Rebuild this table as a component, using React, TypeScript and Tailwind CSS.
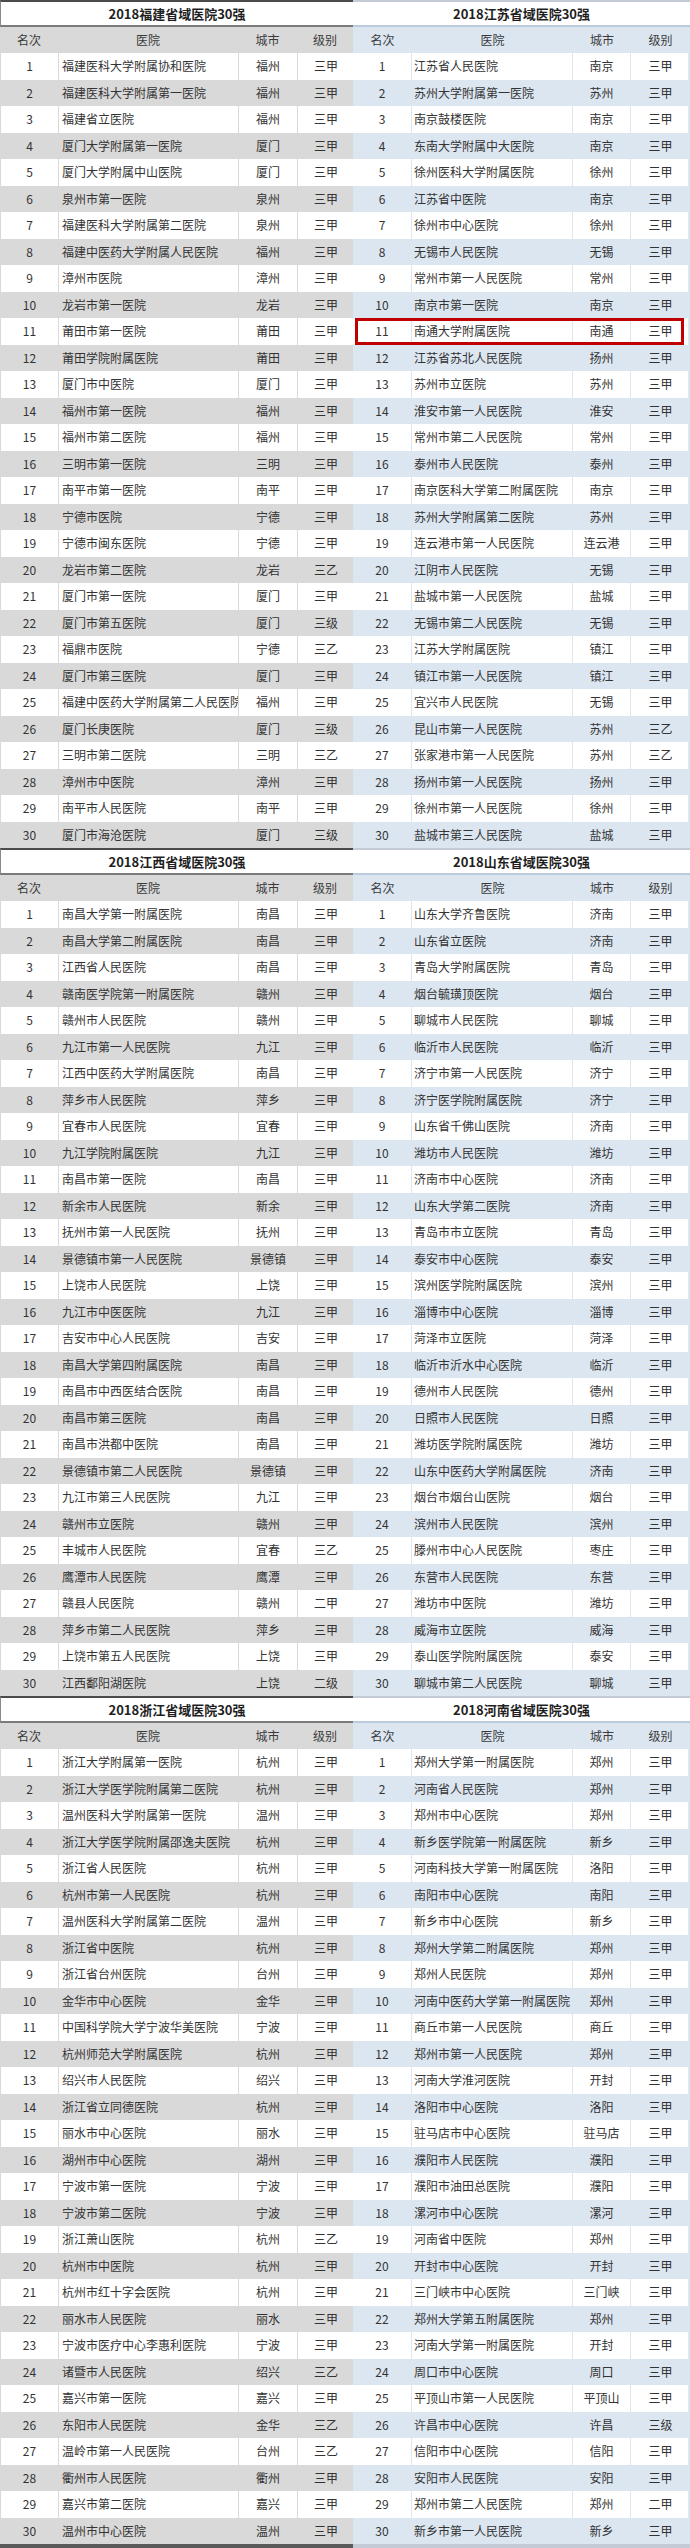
import React from "react";

type Row = [string, string, string];

const fujian: Row[] = [
  ["福建医科大学附属协和医院", "福州", "三甲"],
  ["福建医科大学附属第一医院", "福州", "三甲"],
  ["福建省立医院", "福州", "三甲"],
  ["厦门大学附属第一医院", "厦门", "三甲"],
  ["厦门大学附属中山医院", "厦门", "三甲"],
  ["泉州市第一医院", "泉州", "三甲"],
  ["福建医科大学附属第二医院", "泉州", "三甲"],
  ["福建中医药大学附属人民医院", "福州", "三甲"],
  ["漳州市医院", "漳州", "三甲"],
  ["龙岩市第一医院", "龙岩", "三甲"],
  ["莆田市第一医院", "莆田", "三甲"],
  ["莆田学院附属医院", "莆田", "三甲"],
  ["厦门市中医院", "厦门", "三甲"],
  ["福州市第一医院", "福州", "三甲"],
  ["福州市第二医院", "福州", "三甲"],
  ["三明市第一医院", "三明", "三甲"],
  ["南平市第一医院", "南平", "三甲"],
  ["宁德市医院", "宁德", "三甲"],
  ["宁德市闽东医院", "宁德", "三甲"],
  ["龙岩市第二医院", "龙岩", "三乙"],
  ["厦门市第一医院", "厦门", "三甲"],
  ["厦门市第五医院", "厦门", "三级"],
  ["福鼎市医院", "宁德", "三乙"],
  ["厦门市第三医院", "厦门", "三甲"],
  ["福建中医药大学附属第二人民医院", "福州", "三甲"],
  ["厦门长庚医院", "厦门", "三级"],
  ["三明市第二医院", "三明", "三乙"],
  ["漳州市中医院", "漳州", "三甲"],
  ["南平市人民医院", "南平", "三甲"],
  ["厦门市海沧医院", "厦门", "三级"],
];

const jiangsu: Row[] = [
  ["江苏省人民医院", "南京", "三甲"],
  ["苏州大学附属第一医院", "苏州", "三甲"],
  ["南京鼓楼医院", "南京", "三甲"],
  ["东南大学附属中大医院", "南京", "三甲"],
  ["徐州医科大学附属医院", "徐州", "三甲"],
  ["江苏省中医院", "南京", "三甲"],
  ["徐州市中心医院", "徐州", "三甲"],
  ["无锡市人民医院", "无锡", "三甲"],
  ["常州市第一人民医院", "常州", "三甲"],
  ["南京市第一医院", "南京", "三甲"],
  ["南通大学附属医院", "南通", "三甲"],
  ["江苏省苏北人民医院", "扬州", "三甲"],
  ["苏州市立医院", "苏州", "三甲"],
  ["淮安市第一人民医院", "淮安", "三甲"],
  ["常州市第二人民医院", "常州", "三甲"],
  ["泰州市人民医院", "泰州", "三甲"],
  ["南京医科大学第二附属医院", "南京", "三甲"],
  ["苏州大学附属第二医院", "苏州", "三甲"],
  ["连云港市第一人民医院", "连云港", "三甲"],
  ["江阴市人民医院", "无锡", "三甲"],
  ["盐城市第一人民医院", "盐城", "三甲"],
  ["无锡市第二人民医院", "无锡", "三甲"],
  ["江苏大学附属医院", "镇江", "三甲"],
  ["镇江市第一人民医院", "镇江", "三甲"],
  ["宜兴市人民医院", "无锡", "三甲"],
  ["昆山市第一人民医院", "苏州", "三乙"],
  ["张家港市第一人民医院", "苏州", "三乙"],
  ["扬州市第一人民医院", "扬州", "三甲"],
  ["徐州市第一人民医院", "徐州", "三甲"],
  ["盐城市第三人民医院", "盐城", "三甲"],
];

const jiangxi: Row[] = [
  ["南昌大学第一附属医院", "南昌", "三甲"],
  ["南昌大学第二附属医院", "南昌", "三甲"],
  ["江西省人民医院", "南昌", "三甲"],
  ["赣南医学院第一附属医院", "赣州", "三甲"],
  ["赣州市人民医院", "赣州", "三甲"],
  ["九江市第一人民医院", "九江", "三甲"],
  ["江西中医药大学附属医院", "南昌", "三甲"],
  ["萍乡市人民医院", "萍乡", "三甲"],
  ["宜春市人民医院", "宜春", "三甲"],
  ["九江学院附属医院", "九江", "三甲"],
  ["南昌市第一医院", "南昌", "三甲"],
  ["新余市人民医院", "新余", "三甲"],
  ["抚州市第一人民医院", "抚州", "三甲"],
  ["景德镇市第一人民医院", "景德镇", "三甲"],
  ["上饶市人民医院", "上饶", "三甲"],
  ["九江市中医医院", "九江", "三甲"],
  ["吉安市中心人民医院", "吉安", "三甲"],
  ["南昌大学第四附属医院", "南昌", "三甲"],
  ["南昌市中西医结合医院", "南昌", "三甲"],
  ["南昌市第三医院", "南昌", "三甲"],
  ["南昌市洪都中医院", "南昌", "三甲"],
  ["景德镇市第二人民医院", "景德镇", "三甲"],
  ["九江市第三人民医院", "九江", "三甲"],
  ["赣州市立医院", "赣州", "三甲"],
  ["丰城市人民医院", "宜春", "三乙"],
  ["鹰潭市人民医院", "鹰潭", "三甲"],
  ["赣县人民医院", "赣州", "二甲"],
  ["萍乡市第二人民医院", "萍乡", "三甲"],
  ["上饶市第五人民医院", "上饶", "三甲"],
  ["江西鄱阳湖医院", "上饶", "二级"],
];

const shandong: Row[] = [
  ["山东大学齐鲁医院", "济南", "三甲"],
  ["山东省立医院", "济南", "三甲"],
  ["青岛大学附属医院", "青岛", "三甲"],
  ["烟台毓璜顶医院", "烟台", "三甲"],
  ["聊城市人民医院", "聊城", "三甲"],
  ["临沂市人民医院", "临沂", "三甲"],
  ["济宁市第一人民医院", "济宁", "三甲"],
  ["济宁医学院附属医院", "济宁", "三甲"],
  ["山东省千佛山医院", "济南", "三甲"],
  ["潍坊市人民医院", "潍坊", "三甲"],
  ["济南市中心医院", "济南", "三甲"],
  ["山东大学第二医院", "济南", "三甲"],
  ["青岛市市立医院", "青岛", "三甲"],
  ["泰安市中心医院", "泰安", "三甲"],
  ["滨州医学院附属医院", "滨州", "三甲"],
  ["淄博市中心医院", "淄博", "三甲"],
  ["菏泽市立医院", "菏泽", "三甲"],
  ["临沂市沂水中心医院", "临沂", "三甲"],
  ["德州市人民医院", "德州", "三甲"],
  ["日照市人民医院", "日照", "三甲"],
  ["潍坊医学院附属医院", "潍坊", "三甲"],
  ["山东中医药大学附属医院", "济南", "三甲"],
  ["烟台市烟台山医院", "烟台", "三甲"],
  ["滨州市人民医院", "滨州", "三甲"],
  ["滕州市中心人民医院", "枣庄", "三甲"],
  ["东营市人民医院", "东营", "三甲"],
  ["潍坊市中医院", "潍坊", "三甲"],
  ["威海市立医院", "威海", "三甲"],
  ["泰山医学院附属医院", "泰安", "三甲"],
  ["聊城市第二人民医院", "聊城", "三甲"],
];

const zhejiang: Row[] = [
  ["浙江大学附属第一医院", "杭州", "三甲"],
  ["浙江大学医学院附属第二医院", "杭州", "三甲"],
  ["温州医科大学附属第一医院", "温州", "三甲"],
  ["浙江大学医学院附属邵逸夫医院", "杭州", "三甲"],
  ["浙江省人民医院", "杭州", "三甲"],
  ["杭州市第一人民医院", "杭州", "三甲"],
  ["温州医科大学附属第二医院", "温州", "三甲"],
  ["浙江省中医院", "杭州", "三甲"],
  ["浙江省台州医院", "台州", "三甲"],
  ["金华市中心医院", "金华", "三甲"],
  ["中国科学院大学宁波华美医院", "宁波", "三甲"],
  ["杭州师范大学附属医院", "杭州", "三甲"],
  ["绍兴市人民医院", "绍兴", "三甲"],
  ["浙江省立同德医院", "杭州", "三甲"],
  ["丽水市中心医院", "丽水", "三甲"],
  ["湖州市中心医院", "湖州", "三甲"],
  ["宁波市第一医院", "宁波", "三甲"],
  ["宁波市第二医院", "宁波", "三甲"],
  ["浙江萧山医院", "杭州", "三乙"],
  ["杭州市中医院", "杭州", "三甲"],
  ["杭州市红十字会医院", "杭州", "三甲"],
  ["丽水市人民医院", "丽水", "三甲"],
  ["宁波市医疗中心李惠利医院", "宁波", "三甲"],
  ["诸暨市人民医院", "绍兴", "三乙"],
  ["嘉兴市第一医院", "嘉兴", "三甲"],
  ["东阳市人民医院", "金华", "三乙"],
  ["温岭市第一人民医院", "台州", "三乙"],
  ["衢州市人民医院", "衢州", "三甲"],
  ["嘉兴市第二医院", "嘉兴", "三甲"],
  ["温州市中心医院", "温州", "三甲"],
];

const henan: Row[] = [
  ["郑州大学第一附属医院", "郑州", "三甲"],
  ["河南省人民医院", "郑州", "三甲"],
  ["郑州市中心医院", "郑州", "三甲"],
  ["新乡医学院第一附属医院", "新乡", "三甲"],
  ["河南科技大学第一附属医院", "洛阳", "三甲"],
  ["南阳市中心医院", "南阳", "三甲"],
  ["新乡市中心医院", "新乡", "三甲"],
  ["郑州大学第二附属医院", "郑州", "三甲"],
  ["郑州人民医院", "郑州", "三甲"],
  ["河南中医药大学第一附属医院", "郑州", "三甲"],
  ["商丘市第一人民医院", "商丘", "三甲"],
  ["郑州市第一人民医院", "郑州", "三甲"],
  ["河南大学淮河医院", "开封", "三甲"],
  ["洛阳市中心医院", "洛阳", "三甲"],
  ["驻马店市中心医院", "驻马店", "三甲"],
  ["濮阳市人民医院", "濮阳", "三甲"],
  ["濮阳市油田总医院", "濮阳", "三甲"],
  ["漯河市中心医院", "漯河", "三甲"],
  ["河南省中医院", "郑州", "三甲"],
  ["开封市中心医院", "开封", "三甲"],
  ["三门峡市中心医院", "三门峡", "三甲"],
  ["郑州大学第五附属医院", "郑州", "三甲"],
  ["河南大学第一附属医院", "开封", "三甲"],
  ["周口市中心医院", "周口", "三甲"],
  ["平顶山市第一人民医院", "平顶山", "三甲"],
  ["许昌市中心医院", "许昌", "三级"],
  ["信阳市中心医院", "信阳", "三甲"],
  ["安阳市人民医院", "安阳", "三甲"],
  ["郑州市第二人民医院", "郑州", "二甲"],
  ["新乡市第一人民医院", "新乡", "三甲"],
];

type Variant = "gray" | "blue";

const styles = {
  gray: {
    width: "w-[353px]",
    grid: "grid grid-cols-[58px_180px_59px_56px]",
    stripe: "bg-[#d9d9d9]",
    line: "border-[#d9d9d9]",
    title:
      "h-[26.5px] bg-white border-t-2 border-b-2 border-l border-t-[#4a4a4a] border-b-[#7a7a7a] border-l-[#8a8a8a]",
    padL: "pl-[3px]",
    edge: "border-l border-l-[#d9d9d9]",
  },
  blue: {
    width: "w-[337px]",
    grid: "grid grid-cols-[59px_161px_58px_59px]",
    stripe: "bg-[#dce6f1]",
    line: "border-[#dce6f1]",
    title:
      "h-[26.5px] bg-white border-t-2 border-b-2 border-t-[#c3ccd6] border-b-[#bccbdc]",
    padL: "pl-[2px]",
    edge: "border-r-2 border-r-[#dce6f1]",
  },
};

function Table({
  title,
  rows,
  variant,
  highlight,
}: {
  title: string;
  rows: Row[];
  variant: Variant;
  highlight?: number;
}) {
  const s = styles[variant];
  return (
    <div className={`${s.width} shrink-0`}>
      <div
        className={`${s.title} flex items-center justify-center text-[13px] font-bold text-[#1f1f1f]`}
      >
        {title}
      </div>
      <div
        className={`${s.grid} ${s.stripe} h-[26.5px] items-center text-[12px] text-[#3a3a3a]`}
      >
        <div className="text-center">名次</div>
        <div className="text-center">医院</div>
        <div className="text-center">城市</div>
        <div className="text-center">级别</div>
      </div>
      {rows.map((r, i) => {
        const n = i + 1;
        const bg = n % 2 === 0 ? s.stripe : "bg-white";
        return (
          <div
            key={n}
            className={`${s.grid} ${bg} ${s.edge} relative h-[26.5px] text-[12px] text-[#333333]`}
          >
            <div className={`flex items-center justify-center border-r ${s.line}`}>
              {n}
            </div>
            <div
              className={`flex items-center overflow-hidden whitespace-nowrap border-r ${s.line} ${s.padL}`}
            >
              {r[0]}
            </div>
            <div className={`flex items-center justify-center whitespace-nowrap border-r ${s.line}`}>
              {r[1]}
            </div>
            <div className="flex items-center justify-center">{r[2]}</div>
            {highlight === n && (
              <div className="pointer-events-none absolute left-[2px] right-[4px] top-0 bottom-0 border-[3px] border-[#c00000]" />
            )}
          </div>
        );
      })}
    </div>
  );
}

export default function App() {
  return (
    <div className="w-[690px] bg-white font-['Noto_Sans_CJK_SC','Microsoft_YaHei',sans-serif] leading-none">
      <div className="flex">
        <Table title="2018福建省域医院30强" rows={fujian} variant="gray" />
        <Table title="2018江苏省域医院30强" rows={jiangsu} variant="blue" highlight={11} />
      </div>
      <div className="flex">
        <Table title="2018江西省域医院30强" rows={jiangxi} variant="gray" />
        <Table title="2018山东省域医院30强" rows={shandong} variant="blue" />
      </div>
      <div className="flex">
        <Table title="2018浙江省域医院30强" rows={zhejiang} variant="gray" />
        <Table title="2018河南省域医院30强" rows={henan} variant="blue" />
      </div>
      <div className="flex h-[4px]">
        <div className="w-[353px] bg-[#5a5a5a]" />
        <div className="w-[337px] bg-[#c3ccd6]" />
      </div>
    </div>
  );
}
